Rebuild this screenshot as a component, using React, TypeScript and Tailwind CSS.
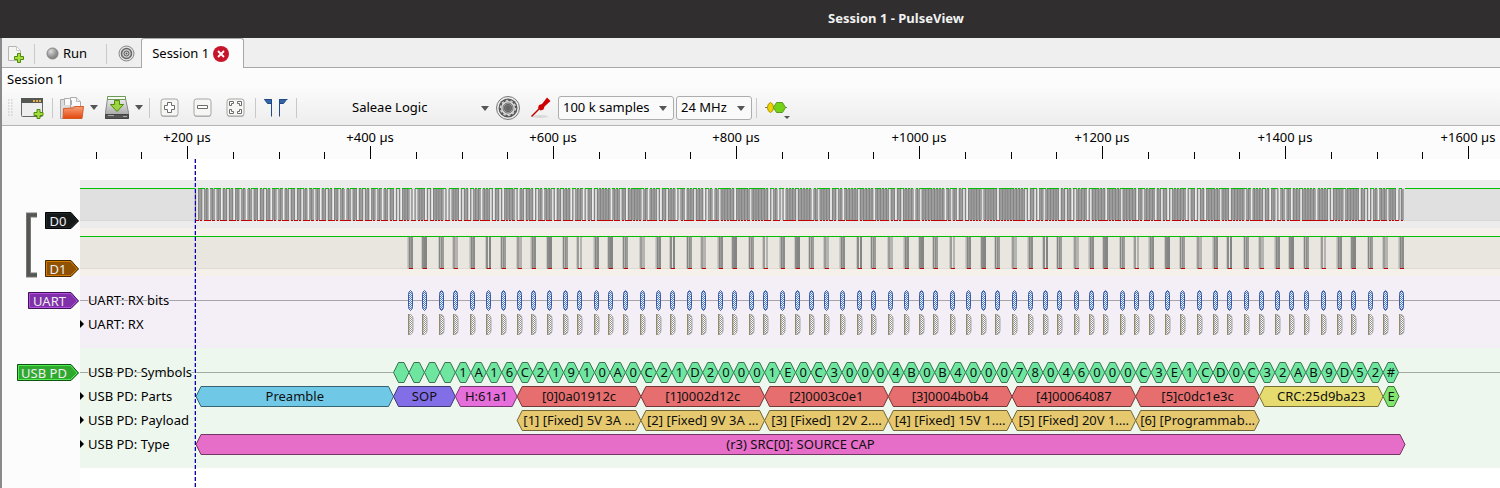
import React from "react";

const ORIGIN = 80;
const BIT = 3.0925;
const FRAME_START = 195.5;
const DATA_START = 393.5;
const SYMBOL = BIT * 5;

const SYMBOLS = "    1A16C21910A0C21D20001E0C30004B0B400078046000C3E1CD0C32AB9D52#";

const CODES: Record<string, string> = {
  "0": "11110", "1": "01001", "2": "10100", "3": "10101", "4": "01010", "5": "01011",
  "6": "01110", "7": "01111", "8": "10010", "9": "10011", A: "10110", B: "10111",
  C: "11010", D: "11011", E: "11100", F: "11101", " ": "11000", "#": "01101",
};

// Biphase mark coding: an edge at every bit start and one more inside each 1.
function frameEdges(): number[] {
  const bits = "01".repeat(32) + SYMBOLS.split("")
    .map((s, i) => (i === 3 ? "10001" : CODES[s]).split("").reverse().join(""))
    .join("");
  const edges: number[] = [];
  bits.split("").forEach((b, i) => {
    const x = FRAME_START + i * BIT;
    edges.push(x);
    if (b === "1") edges.push(x + BIT / 2);
  });
  edges.push(1399, 1401.5, 1403, 1405);
  if (edges.length % 2) edges.pop();
  return edges;
}
const EDGES = frameEdges();

const BYTES = [
  410, 424, 441, 455, 472, 488, 503, 519, 533, 549, 565, 579, 596, 610, 625, 642, 658, 672, 689, 703, 720, 734,
  751, 765, 782, 797, 811, 826, 842, 859, 873, 890, 906, 921, 935, 952, 968, 983, 997, 1014, 1030, 1045, 1059,
  1076, 1091, 1105, 1122, 1136, 1151, 1167, 1182, 1199, 1215, 1229, 1246, 1261, 1277, 1291, 1306, 1323, 1339,
  1353, 1370, 1385, 1401,
];

type Block = { from: number; to: number; label: string; fill: string; stroke: string };
const RED = { fill: "#e66e6e", stroke: "#733737" };
const GOLD = { fill: "#e6c86e", stroke: "#736437" };
const objectAt = (i: number) => DATA_START + SYMBOL * (8 + i * 8);

const PARTS: Block[] = [
  { from: 196, to: DATA_START, label: "Preamble", fill: "#6ec8e6", stroke: "#376473" },
  { from: DATA_START, to: DATA_START + SYMBOL * 4, label: "SOP", fill: "#826ee6", stroke: "#413773" },
  { from: DATA_START + SYMBOL * 4, to: objectAt(0), label: "H:61a1", fill: "#e66edb", stroke: "#73376d" },
  ...["[0]0a01912c", "[1]0002d12c", "[2]0003c0e1", "[3]0004b0b4", "[4]00064087", "[5]c0dc1e3c"].map((label, i) => ({
    from: objectAt(i), to: objectAt(i + 1), label, ...RED,
  })),
  { from: objectAt(6), to: objectAt(7), label: "CRC:25d9ba23", fill: "#e6db6e", stroke: "#736d37" },
  { from: objectAt(7), to: 1399, label: "E", fill: "#82e66e", stroke: "#417337" },
];
const PAYLOAD: Block[] = [
  "[1] [Fixed] 5V 3A …", "[2] [Fixed] 9V 3A …", "[3] [Fixed] 12V 2.…", "[4] [Fixed] 15V 1.…", "[5] [Fixed] 20V 1.…", "[6] [Programmab…",
].map((label, i) => ({ from: objectAt(i), to: objectAt(i + 1), label, ...GOLD }));
const SYMBOL_BLOCKS: Block[] = SYMBOLS.split("").map((label, i) => ({
  from: DATA_START + i * SYMBOL, to: DATA_START + (i + 1) * SYMBOL, label: label.trim(), fill: "#6ee6a0", stroke: "#377350",
}));
const TYPE: Block[] = [{ from: 196, to: 1405, label: "(r3) SRC[0]: SOURCE CAP", fill: "#e66ec8", stroke: "#733764" }];

function Blocks({ items, y }: { items: Block[]; y: number }) {
  const top = y + 0.5;
  return (
    <g>
      {items.map((b, i) => {
        const l = b.from, r = b.to;
        return (
          <g key={i}>
            <polygon
              points={`${l},${top + 10} ${l + 5},${top} ${r - 5},${top} ${r},${top + 10} ${r - 5},${top + 20} ${l + 5},${top + 20}`}
              fill={b.fill} stroke={b.stroke} strokeWidth="1"
            />
            <text x={(l + r) / 2} y={y + 15} textAnchor="middle" fill="#101010">{b.label}</text>
          </g>
        );
      })}
    </g>
  );
}

function RowName({ y, children, halo, arrow }: { y: number; children: string; halo: string; arrow?: boolean }) {
  return (
    <g>
      {arrow && <path d={`M80 ${y - 4}l4 4-4 4z`} fill="#000" />}
      <text x="88" y={y + 5} fill="#000" stroke={halo} strokeWidth="2" paintOrder="stroke">{children}</text>
    </g>
  );
}

function Plot({ className, children }: { className: string; children: React.ReactNode }) {
  return (
    <svg className={`block w-full text-[13px] ${className}`}>
      <g transform={`translate(-${ORIGIN} 0)`}>{children}</g>
    </svg>
  );
}

function DataLine() {
  const lows: [number, number][] = [];
  const highs: [number, number][] = [];
  EDGES.forEach((x, i) => {
    if (i < EDGES.length - 1) (i % 2 ? highs : lows).push([x, EDGES[i + 1]]);
  });
  return (
    <Plot className="h-12 bg-[#ececec]">
      <rect x="80" y="8" width="2000" height="32" fill="#e0e0e0" />
      <path d="M80 40.5H2000" stroke="#d8d8d8" />
      {lows.map(([a, b]) => <rect key={a} x={a} y="9" width={b - a} height="31" fill="#ececec" />)}
      <path d={EDGES.map((x) => `M${x.toFixed(2)} 9V40`).join("")} stroke="#848484" strokeWidth="1.3" />
      <path d={`M80 8.5H${FRAME_START}M1405 8.5H2000` + highs.map(([a, b]) => `M${Math.floor(a)} 8.5H${Math.ceil(b)}`).join("")} stroke="#00c000" />
      <path d={lows.map(([a, b]) => `M${Math.floor(a)} 40.5H${Math.ceil(b)}`).join("")} stroke="#c00000" />
    </Plot>
  );
}

function SerialLine() {
  const shades = ["#858585", "#9c9c9a", "#b5b4b0", "#8c8c8b"];
  return (
    <Plot className="h-12 bg-[#f5f0e9]">
      <rect x="80" y="8" width="2000" height="32" fill="#e9e6df" />
      <path d="M80 40.5H2000" stroke="#dedbd5" />
      <path d="M80 8.5H2000" stroke="#00c000" />
      {BYTES.map((x, i) => (
        <g key={x}>
          <path d={`M${x - 1.5} 9V41`} stroke={shades[(i + 2) % 4]} />
          <path d={`M${x - 0.5} 9V41`} stroke={shades[(i * 3) % 4]} />
          <path d={`M${x + 0.5} 9V41`} stroke={i % 6 === 5 ? "#e4e2dd" : shades[(i * 3 + 1) % 4]} />
          <path d={`M${x + 1.5} 9V41M${x + 2.5} 9V41`} stroke={shades[(i * 5 + 3) % 4]} />
          <path d={`M${x - 2.5} 9V41`} stroke="#cdcac4" />
          <path d={`M${x - 1} 40.5h4`} stroke="#c00000" />
          <path d={`M${x} 8.5h1`} stroke="#789678" />
        </g>
      ))}
    </Plot>
  );
}

function UartRows() {
  return (
    <Plot className="h-[72px] bg-[#f4eff7]">
      <defs>
        <pattern id="blue" width="2" height="2" patternUnits="userSpaceOnUse">
          <rect width="2" height="2" fill="#f4f7ff" />
          <path d="M0 0h1v1H0zM1 1h1v1H1z" fill="#4678d8" />
        </pattern>
        <pattern id="grey" width="2" height="2" patternUnits="userSpaceOnUse">
          <rect width="2" height="2" fill="#fff" />
          <path d="M0 0h1v1H0zM1 1h1v1H1z" fill="#909090" />
        </pattern>
      </defs>
      <path d="M80 24.5H2000" stroke="#a8a5aa" />
      {BYTES.map((x) => (
        <g key={x}>
          <path d={`M${x + 0.5} 14.5q2 1 2 4v12q0 3-2 4q-2-1-2-4v-12q0-3 2-4z`} fill="url(#blue)" stroke="#3f5c98" />
          <path d={`M${x - 1} 38.5h1.5q2.5 1 2.5 4v12q0 3-2.5 4H${x - 1}z`} fill="url(#grey)" stroke="#a8a8a8" />
          <path d={`M${x - 1.5} 38V59`} stroke="#958b62" />
        </g>
      ))}
      <RowName y={24} halo="#f4eff7">UART: RX bits</RowName>
      <RowName y={48} halo="#f4eff7" arrow>UART: RX</RowName>
    </Plot>
  );
}

function UsbRows() {
  const halo = "#eef7ee";
  return (
    <Plot className="h-[120px] bg-[#eef7ee]">
      <path d="M80 24.5H394M1399 24.5H2000" stroke="#a3aaa3" />
      <Blocks items={SYMBOL_BLOCKS} y={14} />
      <Blocks items={PARTS} y={38} />
      <Blocks items={PAYLOAD} y={62} />
      <Blocks items={TYPE} y={86} />
      <RowName y={24} halo={halo}>USB PD: Symbols</RowName>
      <RowName y={48} halo={halo} arrow>USB PD: Parts</RowName>
      <RowName y={72} halo={halo} arrow>USB PD: Payload</RowName>
      <RowName y={96} halo={halo} arrow>USB PD: Type</RowName>
    </Plot>
  );
}

function Ruler() {
  const minor: string[] = [];
  for (let i = -2; i < 32; i++) if (i % 4) minor.push(`M${Math.round(187 + i * 45.75) + 0.5} 26V33`);
  const major = Array.from({ length: 8 }, (_, i) => 187 + i * 183);
  return (
    <svg className="block h-[33px] w-full shrink-0 text-[13px]">
      <g transform="translate(-2 0)">
        <path d={minor.join("") + major.map((x) => `M${x + 0.5} 20V33`).join("")} stroke="#000" />
        {major.map((x, i) => (
          <text key={x} x={x} y="16" textAnchor="middle" fill="#000">{`+${(i + 1) * 200} µs`}</text>
        ))}
      </g>
    </svg>
  );
}

function Tag({ width, fill, line, edge, children }: { width: number; fill: string; line: string; edge: string; children: string }) {
  return (
    <button className="block h-[18px] shrink-0">
      <svg width={width} height="18" className="block text-[13px]">
        <path d={`M.5.5H${width - 8}L${width - 0.5} 9 ${width - 8} 16.5H.5z`} fill={fill} stroke={edge} />
        <path d={`M1.5 1.5H${width - 8.5}L${width - 2} 9 ${width - 8.5} 15.5H1.5z`} fill="none" stroke={line} />
        <text x={(width - 8) / 2} y="14" textAnchor="middle" fill="#eee">{children}</text>
      </svg>
    </button>
  );
}

const Sep = ({ className = "" }: { className?: string }) => <span className={`h-5 w-px shrink-0 bg-[#c9c9c9] ${className}`} />;
const Arrow = ({ className = "" }: { className?: string }) => (
  <svg width="8" height="5" className={`shrink-0 ${className}`}><path d="M0 0h8L4 5z" fill="#555" /></svg>
);

function Combo({ label, className, options, arrowClass }: { label: string; className: string; options: string[]; arrowClass: string }) {
  return (
    <div className="relative shrink-0">
      <select aria-label={label} className={`h-6 appearance-none text-[13px] text-black ${className}`}>
        {options.map((o) => <option key={o}>{o}</option>)}
      </select>
      <Arrow className={`pointer-events-none absolute top-[10px] ${arrowClass}`} />
    </div>
  );
}

const Plus = () => (
  <path d="M3.5.5h3v3h3v3h-3v3h-3v-3h-3v-3h3z" fill="#a5dd3c" stroke="#4e8a0c" />
);

function ZoomButton({ label, children, className = "" }: { label: string; children: React.ReactNode; className?: string }) {
  return (
    <button aria-label={label} className={`shrink-0 ${className}`}>
      <svg width="19" height="20" className="block">
        <rect x="1" y="1.5" width="17" height="17.5" rx="2.5" fill="#bbb" />
        <rect x="1" y="1" width="17" height="17" rx="2.5" fill="#f6f6f4" stroke="#a5a5a2" />
        <g fill="#fff" stroke="#6c6c6a">{children}</g>
      </svg>
    </button>
  );
}

function TabBar() {
  return (
    <div className="flex h-[30px] items-end border-b border-[#a8a8a8] bg-[#efefef]">
      <div className="flex h-[29px] items-center pt-[2px] pl-1">
        <button aria-label="New session">
          <svg width="18" height="18" className="block">
            <path d="M2.5 1.5h8l4 4v10h-12z" fill="#f4f4f2" stroke="#b5b5b2" />
            <path d="M10.5 1.5v4h4z" fill="#fff" stroke="#c9c9c6" />
            <g transform="translate(8 8)"><Plus /></g>
          </svg>
        </button>
        <Sep className="ml-[10px]" />
        <button className="ml-[11px] flex items-center gap-1">
          <svg width="13" height="13">
            <defs><radialGradient id="led" cx=".35" cy=".3" r=".8"><stop offset="0" stopColor="#ddd" /><stop offset=".6" stopColor="#949494" /><stop offset="1" stopColor="#777" /></radialGradient></defs>
            <circle cx="6.5" cy="6.5" r="5.5" fill="url(#led)" stroke="#83837f" />
          </svg>
          <span className="text-[13px]">Run</span>
        </button>
        <Sep className="ml-[19px]" />
        <button aria-label="Settings" className="ml-[11px]">
          <svg width="17" height="17" className="block">
            <circle cx="8.5" cy="8.5" r="7.5" fill="#e4e4e4" stroke="#858585" />
            <circle cx="8.5" cy="8.5" r="5" fill="#d4d4d4" stroke="#666" strokeWidth="1.5" />
            <circle cx="8.5" cy="8.5" r="2.5" fill="#ddd" stroke="#555" />
            <circle cx="8.5" cy="8.5" r="1" fill="#555" />
          </svg>
        </button>
      </div>
      <div className="-mb-px ml-[6px] flex h-[30px] w-[103px] items-center rounded-t-[3px] border border-b-0 border-[#a8a8a8] bg-[#fcfcfc] pl-[10px]">
        <button className="w-[61px] text-left text-[13px]">Session 1</button>
        <button aria-label="Close session">
          <svg width="16" height="16" className="block">
            <circle cx="8" cy="8" r="8" fill="#c7162b" />
            <path d="M5 5l6 6M11 5l-6 6" stroke="#fff" strokeWidth="1.8" />
          </svg>
        </button>
      </div>
    </div>
  );
}

function Toolbar() {
  return (
    <div className="flex h-[38px] items-center border-b border-[#b4b4b4] bg-linear-to-b from-[#fbfbfb] to-[#ededed] pt-[2px] pl-[6px]">
      <svg width="6" height="18" className="shrink-0">
        {[0, 3, 6, 9, 12, 15].map((y) => <path key={y} d={`M0 ${y + 1}h1.5M3 ${y + 1}h1.5`} stroke="#c0c0c0" />)}
      </svg>
      <button aria-label="New view" className="ml-[6px] shrink-0">
        <svg width="25" height="24" className="block">
          <rect x="1.5" y="2.5" width="21" height="18" rx="1" fill="#eee" stroke="#666" />
          <path d="M1 2h22v5H1z" fill="#555753" />
          <path d="M13 4h2v2h-2zM16 4h2v2h-2zM19 4h2v2h-2z" fill="#e9b04a" />
          <g transform="translate(13.5 13)"><Plus /></g>
        </svg>
      </button>
      <Sep className="ml-[7px]" />
      <button aria-label="Open" className="ml-[6px] shrink-0">
        <svg width="26" height="24" className="block">
          <defs>
            <linearGradient id="folder" x1="0" y1="0" x2="0" y2="1"><stop offset="0" stopColor="#f6a07a" /><stop offset="1" stopColor="#e5470d" /></linearGradient>
          </defs>
          <path d="M1.5 3.5h8l2 3v16h-10z" fill="#ddd" stroke="#aaa" />
          <path d="M5.5 9V2.5h5l2 2V9M11.5 11V1.5h6l4 4V11z" fill="#fafafa" stroke="#aaa" />
          <path d="M17.5 1.5v4h4" fill="#eee" stroke="#bbb" />
          <path d="M4.5 12.5l10-.5 1-1.5h9l-1.500 12h-19z" fill="url(#folder)" stroke="#d55a25" />
        </svg>
      </button>
      <Arrow className="ml-[5px]" />
      <button aria-label="Save" className="ml-[6px] shrink-0">
        <svg width="26" height="24" className="block">
          <defs><linearGradient id="disk" x1="0" y1="0" x2="0" y2="1"><stop offset="0" stopColor="#ededed" /><stop offset="1" stopColor="#999" /></linearGradient></defs>
          <path d="M3.5 2.5h18l3 14v6h-23v-6z" fill="url(#disk)" stroke="#888" />
          <path d="M1.5 18.5h23v4h-23z" fill="#555" stroke="#444" />
          <path d="M4 19.5h6M19 20.5h4" stroke="#aaa" />
          <path d="M3.5.5h18v3h-18z" fill="#fafafa" stroke="#6c9b52" />
          <path d="M10.5 4.5h5v4h4l-6.5 7-6.5-7h4z" fill="#9bd43e" stroke="#4e8a0c" />
        </svg>
      </button>
      <Arrow className="ml-[5px]" />
      <Sep className="ml-[6px]" />
      <ZoomButton label="Zoom in" className="ml-[10px]">
        <path d="M7.5 4.5h4v3h3v4h-3v3h-4v-3h-3v-4h3z" />
      </ZoomButton>
      <ZoomButton label="Zoom out" className="ml-[14px]"><path d="M4.5 7.5h10v3h-10z" /></ZoomButton>
      <ZoomButton label="Zoom to fit" className="ml-[14px]">
        <path d="M3.5 3.5h4v2h-2v2h-2zM11.5 3.5h4v4h-2v-2h-2zM3.5 11.5h2v2h2v2h-4zM13.5 11.5h2v4h-4v-2h2z" />
      </ZoomButton>
      <Sep className="ml-[10px]" />
      <button aria-label="Show cursors" className="ml-[8px] shrink-0">
        <svg width="24" height="20" className="block">
          <path d="M.5 1.5h7v17M23.5 1.5h-8v17" fill="none" stroke="#204a87" />
          <path d="M.5 1.5h7v4h-4zM22.5 1.5h-7v4h4z" fill="#3465a4" stroke="#204a87" />
        </svg>
      </button>
      <Sep className="ml-[8px]" />
      <Combo label="Device" className="w-[196px] pl-[55px]" arrowClass="right-[4px]" options={["Saleae Logic"]} />
      <button aria-label="Configure device" className="ml-[3px] shrink-0">
        <svg width="24" height="24" className="block">
          <circle cx="12" cy="12" r="11.5" fill="#eee" stroke="#777" />
          <circle cx="12" cy="12" r="9.5" fill="#555" />
          <circle cx="12" cy="12" r="5.5" fill="none" stroke="#d8d8d8" strokeWidth="3" />
          <circle cx="12" cy="12" r="7.5" fill="none" stroke="#d0d0d0" strokeWidth="1.5" strokeDasharray="2.5 2.2" />
          <circle cx="12" cy="12" r="5" fill="none" stroke="#666" />
          <circle cx="12" cy="12" r="3" fill="#666" stroke="#777" />
        </svg>
      </button>
      <button aria-label="Configure channels" className="ml-[10px] shrink-0">
        <svg width="22" height="24" className="block">
          <ellipse cx="10" cy="20.5" rx="8" ry="1.5" fill="#d8d8d8" />
          <path d="M1.5 20.5l8-8" stroke="#b00" strokeWidth="1.500" />
          <path d="M8 12l1-3 3-1 5-6.500 3.500 3.500-6 5.500-1 3-3 1z" fill="#c00" />
        </svg>
      </button>
      <div className="ml-[6px] flex gap-[2px]">
        <Combo label="Sample count" className="w-[116px] rounded-[3px] border border-[#adadad] bg-[#fafafa] pl-1" arrowClass="right-[7px]" options={["100 k samples"]} />
        <Combo label="Sample rate" className="w-[76px] rounded-[3px] border border-[#adadad] bg-[#fafafa] pl-1" arrowClass="right-[7px]" options={["24 MHz"]} />
      </div>
      <Sep className="ml-1" />
      <button aria-label="Add protocol decoder" className="ml-[8px] shrink-0">
        <svg width="26" height="24" className="block">
          <path d="M0 11.5h22" stroke="#777" />
          <path d="M5.5 6.5q3 1 3 5t-3 5q-3-1-3-5t3-5z" fill="#edd400" stroke="#a89000" />
          <path d="M11.5 6.5h6l3 5-3 5h-6l-3-5z" fill="#73d216" stroke="#5a9c22" />
          <path d="M19 20h6l-3 3z" fill="#555" />
        </svg>
      </button>
    </div>
  );
}

export default function App() {
  return (
    <div className="flex min-h-screen flex-col overflow-hidden bg-[#fcfcfc] font-['Noto_Sans','Open_Sans',sans-serif] text-[13px] text-black">
      <header className="flex h-[38px] shrink-0 items-center justify-center bg-[#302e2e] pl-[292px]">
        <h1 className="text-[13px] font-bold text-[#f2f2f2]">Session 1 - PulseView</h1>
      </header>
      <main className="flex grow flex-col border-l-2 border-[#8a8a8c]">
        <TabBar />
        <h2 className="flex h-[20px] items-center pt-[3px] pl-[5px] text-[13px]">Session 1</h2>
        <Toolbar />
        <Ruler />
        <div className="flex grow">
          <aside className="flex w-[78px] shrink-0 flex-col items-end pt-[53px] pr-px">
            <div className="flex gap-[7px]">
              <svg width="13" height="66" className="block">
                <path d="M12 3H3.5v60H12" fill="none" stroke="#777" strokeWidth="5" />
                <path d="M12 3H3.5v60H12" fill="none" stroke="#555753" strokeWidth="3" />
              </svg>
              <div className="flex flex-col gap-[30px]">
                <Tag width={34} fill="#16191a" line="#202829" edge="#000">D0</Tag>
                <Tag width={34} fill="#8f5202" line="#d47a05" edge="#472901">D1</Tag>
              </div>
            </div>
            <div className="flex flex-col items-end gap-[54px] pt-[14px]">
              <Tag width={51} fill="#8030a8" line="#b84ee8" edge="#3c1450">UART</Tag>
              <Tag width={62} fill="#30a830" line="#4ef04e" edge="#145014">USB PD</Tag>
            </div>
          </aside>
          <section aria-label="Traces" className="relative min-w-0 grow bg-white pt-[21px]">
            <DataLine />
            <SerialLine />
            <UartRows />
            <UsbRows />
            <svg className="pointer-events-none absolute top-0 left-[114px] h-full w-[3px]">
              <path d="M.5 0V900" stroke="#a8a8dc" strokeDasharray="4 2" />
              <path d="M1.5 0V900" stroke="#0808a0" strokeDasharray="4 2" />
            </svg>
          </section>
        </div>
      </main>
    </div>
  );
}
